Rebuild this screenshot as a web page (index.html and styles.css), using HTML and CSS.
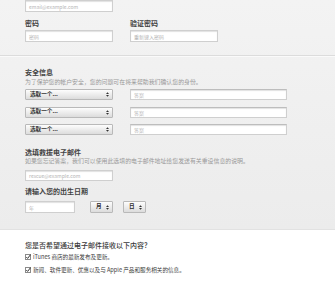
FILE: index.html
```html
<!DOCTYPE html>
<html lang="zh-CN">
<head>
<meta charset="utf-8">
<link rel="stylesheet" href="styles.css">
</head>
<body>
<div class="page">
  <section class="form-area">
    <div class="field w88 first"><span class="ph">email@example.com</span></div>

    <div class="pair">
      <div class="col">
        <div class="label">密码</div>
        <div class="field w88"><span class="ph">密码</span></div>
      </div>
      <div class="col">
        <div class="label">验证密码</div>
        <div class="field w88"><span class="ph">重新键入密码</span></div>
      </div>
    </div>

    <div class="divider"></div>

    <div class="label mt-sec">安全信息</div>
    <div class="hint">为了保护您的帐户安全，您的问题可在将来帮助我们确认您的身份。</div>

    <div class="qa-list">
      <div class="qa">
        <div class="select w88"><span>选取一个...</span><svg class="arr" viewBox="0 0 4 6"><path d="M2 0L4 2.4H0Z M2 6L4 3.6H0Z" fill="#333"/></svg></div>
        <div class="field answer"><span class="ph">答案</span></div>
      </div>
      <div class="qa">
        <div class="select w88"><span>选取一个...</span><svg class="arr" viewBox="0 0 4 6"><path d="M2 0L4 2.4H0Z M2 6L4 3.6H0Z" fill="#333"/></svg></div>
        <div class="field answer"><span class="ph">答案</span></div>
      </div>
      <div class="qa">
        <div class="select w88"><span>选取一个...</span><svg class="arr" viewBox="0 0 4 6"><path d="M2 0L4 2.4H0Z M2 6L4 3.6H0Z" fill="#333"/></svg></div>
        <div class="field answer"><span class="ph">答案</span></div>
      </div>
    </div>

    <div class="label mt-rescue">选填救援电子邮件</div>
    <div class="hint">如果您忘记答案，我们可以使用此选填的电子邮件地址给您发送有关重设信息的说明。</div>
    <div class="field w88 rescue"><span class="ph">rescue@example.com</span></div>

    <div class="label mt-birth">请输入您的出生日期</div>
    <div class="date-row">
      <div class="field year"><span class="ph">年</span></div>
      <div class="select small month"><span>月</span><svg class="arr" viewBox="0 0 4 6"><path d="M2 0L4 2.4H0Z M2 6L4 3.6H0Z" fill="#333"/></svg></div>
      <div class="select small day"><span>日</span><svg class="arr" viewBox="0 0 4 6"><path d="M2 0L4 2.4H0Z M2 6L4 3.6H0Z" fill="#333"/></svg></div>
    </div>
  </section>

  <section class="subscribe">
    <div class="question">您是否希望通过电子邮件接收以下内容？</div>
    <div class="opt"><svg class="cb" viewBox="0 0 6 6"><rect x="0.5" y="0.5" width="5" height="5" fill="#fff" stroke="#8a8a8a"/><path d="M1.3 3.1L2.6 4.4L5.6 0.6" fill="none" stroke="#333" stroke-width="1"/></svg><span>iTunes 商店的最新发布及更新。</span></div>
    <div class="opt"><svg class="cb" viewBox="0 0 6 6"><rect x="0.5" y="0.5" width="5" height="5" fill="#fff" stroke="#8a8a8a"/><path d="M1.3 3.1L2.6 4.4L5.6 0.6" fill="none" stroke="#333" stroke-width="1"/></svg><span>新闻、软件更新、优惠以及与 Apple 产品和服务相关的信息。</span></div>
  </section>
</div>
</body>
</html>
```

FILE: styles.css
```css
* { box-sizing: border-box; }
html, body { margin: 0; padding: 0; }
body {
  width: 335px;
  height: 284px;
  overflow: hidden;
  font-family: "Noto Sans CJK SC", "Noto Sans", sans-serif;
  background: #fff;
}
.page { width: 335px; }

.form-area {
  background: linear-gradient(#f3f3f3, #ececec);
  padding: 0 0 16px 25px;
  border-bottom: 1px solid #e2e2e2;
}

.field {
  height: 12px;
  background: #fff;
  border: 1px solid #cfcfcf;
  box-shadow: inset 0 1px 1px rgba(0,0,0,0.12);
  display: flex;
  align-items: center;
  padding-left: 3px;
}
.ph {
  font-size: 5px;
  line-height: 1;
  color: #b4b4b4;
  white-space: nowrap;
}
.w88 { width: 88px; }
.first { margin-top: 0; }

.pair {
  display: flex;
  gap: 17px;
  margin-top: 5px;
}
.label {
  font-size: 7px;
  line-height: 12px;
  font-weight: 700;
  color: #444;
  margin-bottom: 1px;
  white-space: nowrap;
}

.divider {
  margin: 13px 0 0 -25px;
  height: 2px;
  border-top: 1px solid #dcdcdc;
  border-bottom: 1px solid #fafafa;
}

.mt-sec { margin-top: 10px; line-height: 10px; margin-bottom: 1px; }
.hint {
  font-size: 5.9px;
  line-height: 8px;
  color: #999;
  white-space: nowrap;
}

.qa-list {
  margin-top: 3px;
  display: flex;
  flex-direction: column;
  gap: 6.5px;
}
.qa {
  display: flex;
  gap: 17px;
  height: 11px;
}
.qa .field { height: 11px; }
.answer {
  width: 157px;
  border-top-color: #bdbdbd;
}

.select {
  height: 11px;
  border: 1px solid #b9b9b9;
  border-radius: 1px;
  background: linear-gradient(#fdfdfd, #dcdcdc);
  display: flex;
  align-items: center;
  justify-content: space-between;
  padding: 0 3px 0 4px;
}
.select span {
  font-size: 5.6px;
  font-weight: 700;
  color: #2e2e2e;
  line-height: 1;
}
.arr { width: 3px; height: 5px; display: block; }

.mt-rescue { margin-top: 12px; line-height: 10px; margin-bottom: 0; }
.rescue { margin-top: 5px; height: 11px; }
.mt-birth { margin-top: 5px; line-height: 10px; margin-bottom: 0; }

.date-row {
  margin-top: 5px;
  display: flex;
  align-items: center;
}
.year { width: 50px; height: 12px; }
.small { width: 23px; height: 12px; padding: 0 3px 0 5px; }
.month { margin-left: 15px; }
.day { margin-left: 10px; }

.subscribe {
  background: #fff;
  padding: 10px 0 0 25px;
}
.question {
  font-size: 7px;
  line-height: 10px;
  color: #3a3a3a;
  font-weight: 500;
  white-space: nowrap;
}
.opt {
  display: flex;
  align-items: center;
  gap: 2px;
  height: 13px;
}
.cb { width: 6px; height: 6px; display: block; flex: none; }
.opt span {
  font-size: 5.6px;
  color: #3a3a3a;
  white-space: nowrap;
}
```
